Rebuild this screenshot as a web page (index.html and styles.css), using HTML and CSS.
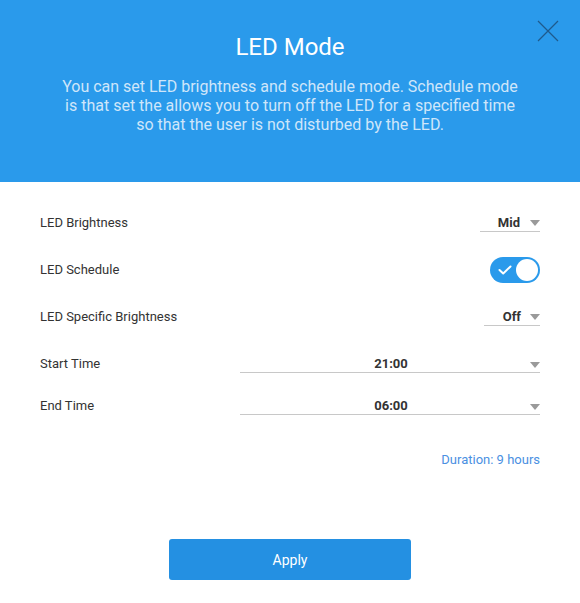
FILE: index.html
```html
<!DOCTYPE html>
<html>
<head>
<meta charset="utf-8">
<link rel="stylesheet" href="styles.css">
</head>
<body>
<div class="dialog">
  <header class="head">
    <button class="close" aria-label="Close">
      <svg width="22" height="22" viewBox="0 0 22 22"><path d="M1 1L21 21M21 1L1 21" stroke="#1f5a8c" stroke-width="1.2" fill="none"/></svg>
    </button>
    <h1 class="title">LED Mode</h1>
    <p class="desc">You can set LED brightness and schedule mode. Schedule mode is that set the allows you to turn off the LED for a specified time so that the user is not disturbed by the LED.</p>
  </header>
  <main class="body">
    <div class="row r1">
      <span class="label">LED Brightness</span>
      <div class="select small">
        <span class="val">Mid</span><span class="caret"></span>
      </div>
    </div>
    <div class="row r2">
      <span class="label">LED Schedule</span>
      <div class="toggle">
        <svg class="check" width="14" height="10" viewBox="0 0 14 10"><path d="M1.5 5L5.2 8.5L12.5 1.5" stroke="#fff" stroke-width="2" fill="none" stroke-linecap="round" stroke-linejoin="round"/></svg>
        <span class="knob"></span>
      </div>
    </div>
    <div class="row r3">
      <span class="label">LED Specific Brightness</span>
      <div class="select small off">
        <span class="val">Off</span><span class="caret"></span>
      </div>
    </div>
    <div class="row r4">
      <span class="label">Start Time</span>
      <div class="select wide">
        <span class="val">21:00</span><span class="caret"></span>
      </div>
    </div>
    <div class="row r5">
      <span class="label">End Time</span>
      <div class="select wide">
        <span class="val">06:00</span><span class="caret"></span>
      </div>
    </div>
    <div class="duration">Duration: 9 hours</div>
    <div class="actions">
      <button class="apply">Apply</button>
    </div>
  </main>
</div>
</body>
</html>
```
FILE: styles.css
```css
* { box-sizing: border-box; }
html, body { margin: 0; padding: 0; background: #fff; }
body { font-family: Roboto, "Noto Sans", Arial, sans-serif; width: 580px; height: 603px; overflow: hidden; }

.dialog { width: 580px; }

.head {
  position: relative;
  background: #2a9aeb;
  height: 182px;
  padding: 31px 56px 0;
  text-align: center;
}
.close {
  position: absolute;
  top: 20px;
  right: 21px;
  width: 22px;
  height: 22px;
  padding: 0;
  border: 0;
  background: none;
  line-height: 0;
}
.title {
  margin: 0;
  font-size: 24px;
  font-weight: 400;
  color: #fff;
  line-height: 32px;
}
.desc {
  margin: 14px 0 0;
  font-size: 16px;
  line-height: 19px;
  color: #cfe6fa;
}

.body { padding: 0 40px; }
.row {
  display: flex;
  align-items: center;
  justify-content: space-between;
  color: #333;
  font-size: 13px;
}
.r1 { height: 47px; margin-top: 17px; }
.r2 { height: 47px; }
.r3 { height: 47px; }
.r4 { height: 47px; }
.r5 { height: 37px; }

.select {
  position: relative;
  display: flex;
  align-items: center;
  height: 18px;
  border-bottom: 1px solid #c8c8c8;
  margin-top: 1px;
}
.select .val { font-weight: 700; color: #333; font-size: 13px; }
.caret {
  width: 0; height: 0;
  border-left: 5px solid transparent;
  border-right: 5px solid transparent;
  border-top: 6px solid #9a9a9a;
}
.small { width: 60px; justify-content: flex-end; }
.small .val { margin-right: 10px; }
.small.off { width: 56px; }
.small.off .val { margin-right: 9px; }
.wide { width: 300px; justify-content: center; }
.wide .val { margin-left: 2px; }
.wide .caret { position: absolute; right: 0; top: 7px; }

.toggle {
  position: relative;
  width: 50px;
  height: 26px;
  border-radius: 13px;
  background: #2a9aeb;
}
.check { position: absolute; left: 8px; top: 8px; }
.knob {
  position: absolute;
  right: 2px;
  top: 2px;
  width: 22px;
  height: 22px;
  border-radius: 50%;
  background: #fff;
}

.duration {
  margin-top: 28px;
  text-align: right;
  color: #4a90e2;
  font-size: 13px;
  line-height: 16px;
}

.actions { display: flex; justify-content: center; margin-top: 71px; }
.apply {
  width: 242px;
  height: 41px;
  border: 0;
  border-radius: 3px;
  background: #2490e2;
  color: #fff;
  font-family: inherit;
  font-size: 14px;
}
```
